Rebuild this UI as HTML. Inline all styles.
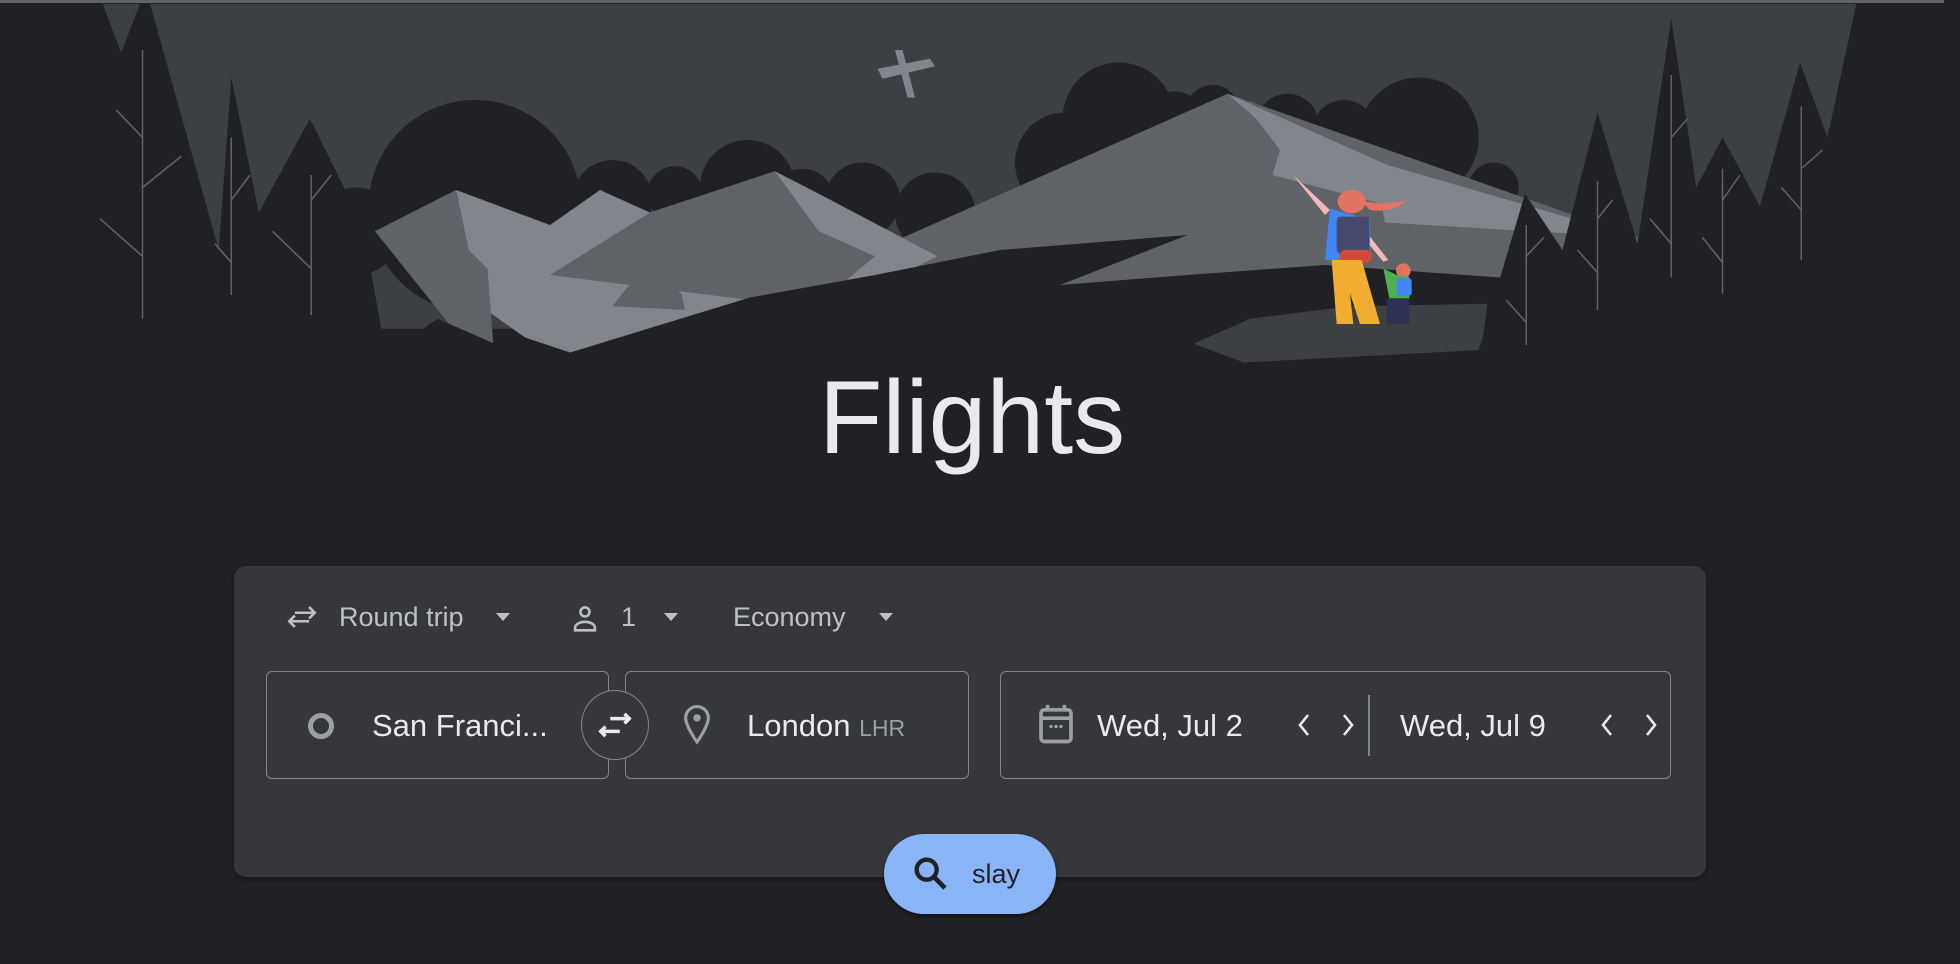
<!DOCTYPE html>
<html><head><meta charset="utf-8"><style>
html,body{margin:0;padding:0;background:#202124;width:1960px;height:964px;overflow:hidden;font-family:"Liberation Sans",Arial,sans-serif;}
.abs{position:absolute}
.topline{left:0;top:0;width:1944px;height:3px;background:#5f6368}
.scroll{right:0;top:0;width:16px;height:964px;background:#202124}
h1{position:absolute;left:0;width:1944px;top:359px;margin:0;text-align:center;font-weight:400;font-size:104px;color:#e8eaed;letter-spacing:0px}
.card{left:234px;top:566px;width:1472px;height:311px;background:#36373a;border-radius:12px;box-shadow:0 2px 6px rgba(0,0,0,.4)}
.sel{color:#bdc1c6;font-size:27px;top:602px}
.box{border:1.5px solid #80868b;border-radius:6px;top:671px;height:108px;box-sizing:border-box}
.itxt{color:#e8eaed;font-size:31px;top:708px}
.btn{left:884px;top:834px;width:172px;height:80px;background:#8ab4f8;border-radius:40px;box-shadow:0 2px 4px rgba(0,0,0,.5)}
</style></head><body>
<svg class="abs" style="left:0;top:0" width="1960" height="380" viewBox="0 0 1568 304">
<rect x="0" y="3" width="1555" height="301" fill="#202124"/>
<rect x="80" y="3" width="1410" height="260" fill="#3c3f43"/>
<g fill="#202124">
<circle cx="380" cy="165" r="85"/>
<circle cx="490" cy="160" r="32"/><circle cx="540" cy="155" r="22"/><circle cx="598" cy="150" r="38"/><circle cx="642" cy="160" r="25"/><circle cx="690" cy="160" r="30"/><circle cx="748" cy="170" r="32"/>
<circle cx="895" cy="95" r="45"/><circle cx="852" cy="130" r="40"/><circle cx="940" cy="95" r="22"/><circle cx="970" cy="90" r="22"/><circle cx="1030" cy="100" r="25"/><circle cx="1075" cy="105" r="25"/><circle cx="1135" cy="110" r="48"/><circle cx="1195" cy="150" r="20"/>
<circle cx="285" cy="185" r="35"/>
</g>
<polygon fill="#5f6368" points="700,200 982,75 1310,190 1310,280 700,280"/>
<polygon fill="#80868b" points="982,75 1005,95 1024,120 1018,140 1105,163 1108,178 1310,190 1110,132"/>
<polygon fill="#80868b" points="300,185 365,152 440,180 480,152 520,170 620,137 655,155 750,205 690,235 600,245 560,260 480,290 420,270"/>
<polygon fill="#5f6368" points="440,220 520,170 620,137 655,185 700,205 670,230 600,240"/>
<polygon fill="#5f6368" points="300,185 365,152 375,200 390,215 395,280 360,260"/>
<polygon fill="#5f6368" points="490,245 517,210 545,235 548,248"/>
<polygon fill="#202124" points="0,290 300,290 350,255 430,290 600,238 700,220 800,200 950,188 848,228 950,220 1060,212 1200,222 1220,290 1555,290 1555,304 0,304"/>
<polygon fill="#3c4043" points="955,275 1000,255 1080,245 1190,243 1185,280 995,290"/>
<g fill="#202124">
<polygon points="0,3 82,3 97,42 112,3 120,3 175,200 185,62 207,170 248,95 290,180 310,290 0,290"/>
<polygon points="1485,3 1555,3 1555,290 1180,290 1220,155 1250,200 1278,90 1310,195 1337,15 1357,150 1378,110 1408,165 1440,50 1462,110"/>
</g>
<g stroke="#5f6368" stroke-width="1.2" fill="none">
<path d="M114 40V255M93 88L114 110M114 150L145 125M80 175L114 205"/>
<path d="M185 110V236M172 195L185 210M185 160L200 140"/>
<path d="M249 140V252M218 185L249 215M249 160L265 140"/>
<path d="M1337 60V222M1320 175L1337 195M1337 110L1350 95"/>
<path d="M1378 135V235M1362 190L1378 210M1378 160L1392 140"/>
<path d="M1441 85V208M1425 150L1441 168M1441 135L1458 120"/>
<path d="M1278 145V248M1262 200L1278 218M1278 175L1290 160"/>
<path d="M1221 180V276M1205 240L1221 258M1221 205L1235 190"/>
</g>
<path d="M702 55L744 47L748 53L706 63Z M716 40L722 40L732 78L726 78Z" fill="#80868b"/>
</svg>
<svg class="abs" style="left:1270px;top:160px" width="200" height="200" viewBox="0 0 600 600">
<path d="M68 44L180 150L165 165Z" fill="#f4b8b8"/>
<path d="M300 230L355 300L340 305L290 245Z" fill="#f4b8b8"/>
<ellipse cx="245" cy="125" rx="42" ry="35" fill="#e37361"/>
<path d="M270 120Q340 140 410 120Q370 160 300 150Z" fill="#e37361"/>
<path d="M180 145L300 180L300 300L165 300Z" fill="#4285f4"/>
<rect x="200" y="170" width="98" height="110" rx="12" fill="#454a6e"/>
<rect x="208" y="270" width="98" height="38" rx="18" fill="#d2493a"/>
<path d="M185 300L275 300L330 492L270 492L240 400L250 492L200 492Z" fill="#f1ad2f"/>
<ellipse cx="400" cy="332" rx="22" ry="22" fill="#e37361"/>
<path d="M340 325L380 345L418 350L418 415L358 415Z" fill="#4caf50"/>
<rect x="380" y="355" width="45" height="52" rx="8" fill="#4285f4"/>
<rect x="350" y="415" width="68" height="78" fill="#2d3252"/>
</svg>
<div class="abs topline"></div>
<h1>Flights</h1>
<div class="abs card"></div>
<svg class="abs" style="left:284px;top:600px" width="36" height="34" viewBox="0 0 24 24"><path d="M7 11l-4 4 4 4M3 15h14M17 5l4 4-4 4M21 9H7" stroke="#bdc1c6" stroke-width="1.8" fill="none"/></svg>
<div class="abs sel" style="left:339px">Round trip</div>
<div class="abs" style="left:496px;top:613px;border:7px solid transparent;border-top:8px solid #bdc1c6;border-bottom:0"></div>
<svg class="abs" style="left:568px;top:602px" width="34" height="34" viewBox="0 0 24 24"><circle cx="12" cy="7" r="3.2" stroke="#bdc1c6" stroke-width="1.8" fill="none"/><path d="M5 20v-2c0-2.5 4-4 7-4s7 1.5 7 4v2Z" stroke="#bdc1c6" stroke-width="1.8" fill="none"/></svg>
<div class="abs sel" style="left:621px">1</div>
<div class="abs" style="left:664px;top:613px;border:7px solid transparent;border-top:8px solid #bdc1c6;border-bottom:0"></div>
<div class="abs sel" style="left:733px">Economy</div>
<div class="abs" style="left:879px;top:613px;border:7px solid transparent;border-top:8px solid #bdc1c6;border-bottom:0"></div>

<div class="abs box" style="left:266px;width:343px"></div>
<div class="abs box" style="left:625px;width:344px"></div>
<div class="abs box" style="left:1000px;width:671px"></div>
<div class="abs" style="left:1368px;top:695px;width:1.5px;height:61px;background:#80868b"></div>
<div class="abs" style="left:581px;top:690px;width:68px;height:70px;border-radius:50%;background:#36373a;border:1.5px solid #80868b;box-sizing:border-box"></div>
<svg class="abs" style="left:595px;top:706px" width="40" height="38" viewBox="0 0 24 24"><path d="M6 13l-3 3 3 3M3 16h12M18 5l3 3-3 3M21 8H9" stroke="#e8eaed" stroke-width="2.2" fill="none"/></svg>
<div class="abs" style="left:308px;top:713px;width:16px;height:16px;border:5px solid #9aa0a6;border-radius:50%"></div>
<div class="abs itxt" style="left:372px">San Franci...</div>
<svg class="abs" style="left:680px;top:703px" width="34" height="44" viewBox="0 0 24 30"><path d="M12 2a8 8 0 0 0-8 8c0 6 8 17 8 17s8-11 8-17a8 8 0 0 0-8-8z" stroke="#9aa0a6" stroke-width="2.2" fill="none"/><circle cx="12" cy="10" r="2.6" fill="#9aa0a6"/></svg>
<div class="abs itxt" style="left:747px">London <span style="font-size:23px;color:#9aa0a6">LHR</span></div>
<svg class="abs" style="left:1036px;top:703px" width="40" height="42" viewBox="0 0 24 25"><rect x="3" y="4" width="18" height="19" rx="2" stroke="#9aa0a6" stroke-width="2.2" fill="none"/><path d="M3 9h18M7 1v4M17 1v4" stroke="#9aa0a6" stroke-width="2.2"/><circle cx="9" cy="14" r="1" fill="#9aa0a6"/><circle cx="12" cy="14" r="1" fill="#9aa0a6"/><circle cx="15" cy="14" r="1" fill="#9aa0a6"/></svg>
<div class="abs itxt" style="left:1097px">Wed, Jul 2</div>
<div class="abs itxt" style="left:1400px">Wed, Jul 9</div>
<svg class="abs" style="left:1290px;top:710px" width="72" height="30" viewBox="0 0 72 30"><path d="M18 5L10 15L18 25M54 5L62 15L54 25" stroke="#e8eaed" stroke-width="2.6" fill="none"/></svg>
<svg class="abs" style="left:1593px;top:710px" width="72" height="30" viewBox="0 0 72 30"><path d="M18 5L10 15L18 25M54 5L62 15L54 25" stroke="#e8eaed" stroke-width="2.6" fill="none"/></svg>
<div class="abs btn"></div>
<svg class="abs" style="left:910px;top:853px" width="40" height="40" viewBox="0 0 24 24"><circle cx="10" cy="10" r="6" stroke="#202124" stroke-width="2.6" fill="none"/><path d="M14.5 14.5L21 21" stroke="#202124" stroke-width="2.8"/></svg>
<div class="abs" style="left:972px;top:859px;font-size:27px;color:#202124">slay</div>
<div class="abs scroll"></div>
</body></html>
